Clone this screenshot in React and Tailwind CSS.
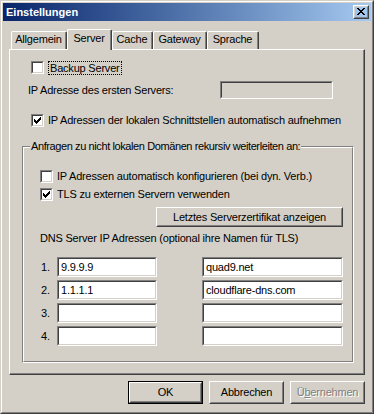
import React from "react";

const Sunken = ({ className = "", inner = "bg-white", children }) => (
  <div className={`border border-t-[#808080] border-l-[#808080] border-r-white border-b-white ${className}`}>
    <div className={`h-full w-full border border-t-[#404040] border-l-[#404040] border-r-[#D4D0C8] border-b-[#D4D0C8] ${inner} flex items-center pl-px overflow-hidden whitespace-nowrap`}>
      {children}
    </div>
  </div>
);

const Raised = ({ className = "", innerClass = "", children }) => (
  <div className={`border border-t-white border-l-white border-r-[#404040] border-b-[#404040] ${className}`}>
    <div className={`h-full w-full border border-t-[#D4D0C8] border-l-[#D4D0C8] border-r-[#808080] border-b-[#808080] flex justify-center ${innerClass}`}>
      {children}
    </div>
  </div>
);

const Check = ({ checked }) => (
  <div className="w-[13px] h-[13px] shrink-0 border border-t-[#808080] border-l-[#808080] border-r-white border-b-white">
    <div className="h-full w-full border border-t-[#404040] border-l-[#404040] border-r-[#D4D0C8] border-b-[#D4D0C8] bg-white pl-px pt-px">
      {checked && (
        <svg width="7" height="7" viewBox="0 0 7 7" shapeRendering="crispEdges" className="block">
          <path
            fill="#000"
            d="M6 0h1v1h-1z M5 1h2v1h-2z M0 2h1v1h-1z M4 2h3v1h-3z M0 3h2v1h-2z M3 3h3v1h-3z M0 4h5v1h-5z M1 5h3v1h-3z M2 6h1v1h-1z"
          />
        </svg>
      )}
    </div>
  </div>
);

const Tab = ({ className = "", children }) => (
  <div className={`h-[18px] border-t border-l border-t-white border-l-white border-r border-r-[#404040] rounded-tl-[2px] rounded-tr-[2px] ${className}`}>
    <div className="h-full border-r border-r-[#808080] flex items-center justify-center pb-[2px] whitespace-nowrap">
      {children}
    </div>
  </div>
);

const DnsRow = ({ n, ip, name }) => (
  <div className="flex items-center h-[20px] ml-[16px]">
    <span className="w-[17px] pl-px">{n}</span>
    <Sunken className="w-[100px] h-[20px]">
      <span className="pl-px">{ip}</span>
    </Sunken>
    <Sunken className="ml-[45px] w-[141px] h-[20px]">
      <span className="pl-px">{name}</span>
    </Sunken>
  </div>
);

export default function App() {
  return (
    <div className="w-[374px] h-[414px] bg-[#D4D0C8] border border-t-[#D4D0C8] border-l-[#D4D0C8] border-r-[#404040] border-b-[#404040] font-['Liberation_Sans',Arial,sans-serif] text-[11px] leading-[13px] tracking-[-0.2px] text-black select-none">
      <div className="h-full border border-t-white border-l-white border-r-[#808080] border-b-[#808080] p-px flex flex-col">
        {/* Title bar */}
        <div className="h-[18px] shrink-0 flex items-center pl-[3px] pr-[2px] bg-linear-to-r from-[#0A246A] to-[#A6CAF0]">
          <span className="text-white font-bold tracking-normal">Einstellungen</span>
          <Raised className="ml-auto w-[16px] h-[14px]" innerClass="items-start pt-px">
            <svg width="8" height="7" viewBox="0 0 8 7" shapeRendering="crispEdges" className="block">
              <path
                fill="#000"
                d="M0 0h2v1h-2z M6 0h2v1h-2z M1 1h2v1h-2z M5 1h2v1h-2z M2 2h4v1h-4z M3 3h2v1h-2z M2 4h4v1h-4z M1 5h2v1h-2z M5 5h2v1h-2z M0 6h2v1h-2z M6 6h2v1h-2z"
              />
            </svg>
          </Raised>
        </div>

        <div className="flex-1 px-[6px] pt-[8px] flex flex-col">
          {/* Tabs */}
          <div className="h-[20px] flex items-end pl-[2px]">
            <Tab className="w-[56px]">Allgemein</Tab>
            <div className="relative z-10 w-[45px] h-[21px] -mb-px bg-[#D4D0C8] border-t border-l border-t-white border-l-white border-r border-r-[#404040] rounded-tl-[2px] rounded-tr-[2px]">
              <div className="h-full border-r border-r-[#808080] flex items-center justify-center pb-[3px]">Server</div>
            </div>
            <Tab className="w-[41px]">Cache</Tab>
            <Tab className="w-[54px]">Gateway</Tab>
            <Tab className="w-[52px]">Sprache</Tab>
          </div>

          {/* Panel */}
          <div className="h-[326px] border-t border-l border-t-white border-l-white border-r border-b border-r-[#404040] border-b-[#404040]">
            <div className="h-full border-r border-b border-r-[#808080] border-b-[#808080] flex flex-col">
              <div className="mt-[11px] ml-[21px] flex items-center h-[13px]">
                <Check />
                <span className="ml-[4px] border border-dotted border-black px-px h-[14px] leading-[12px]">Backup Server</span>
              </div>

              <div className="mt-[7px] ml-[18px] flex items-center h-[18px]">
                <span className="w-[192px] whitespace-nowrap">IP Adresse des ersten Servers:</span>
                <Sunken className="w-[113px] h-[18px]" inner="bg-[#D4D0C8]" />
              </div>

              <div className="mt-[15px] ml-[21px] flex items-center h-[13px]">
                <Check checked />
                <span className="ml-[4px] whitespace-nowrap">IP Adressen der lokalen Schnittstellen automatisch aufnehmen</span>
              </div>

              {/* Group box */}
              <div className="relative mt-[19px] ml-[12px] mr-[9px] h-[217px] border border-t-[#808080] border-l-[#808080] border-r-white border-b-white">
                <div className="h-full border border-t-white border-l-white border-r-[#808080] border-b-[#808080] flex flex-col">
                  <div className="mt-[22px] ml-[16px] flex items-center h-[13px]">
                    <Check />
                    <span className="ml-[4px] whitespace-nowrap">IP Adressen automatisch konfigurieren (bei dyn. Verb.)</span>
                  </div>
                  <div className="mt-[5px] ml-[16px] flex items-center h-[13px]">
                    <Check checked />
                    <span className="ml-[4px] whitespace-nowrap">TLS zu externen Servern verwenden</span>
                  </div>
                  <Raised className="mt-[6px] self-end mr-[9px] w-[187px] h-[20px]" innerClass="items-center">
                    <span className="whitespace-nowrap">Letztes Serverzertifikat anzeigen</span>
                  </Raised>
                  <div className="mt-[5px] ml-[16px] h-[13px] whitespace-nowrap">
                    DNS Server IP Adressen (optional ihre Namen für TLS)
                  </div>
                  <div className="mt-[12px] flex flex-col gap-[3px]">
                    <DnsRow n="1." ip="9.9.9.9" name="quad9.net" />
                    <DnsRow n="2." ip="1.1.1.1" name="cloudflare-dns.com" />
                    <DnsRow n="3." ip="" name="" />
                    <DnsRow n="4." ip="" name="" />
                  </div>
                </div>
                <span className="absolute left-[7px] -top-[7px] px-px bg-[#D4D0C8] whitespace-nowrap tracking-[-0.4px]">
                  Anfragen zu nicht lokalen Domänen rekursiv weiterleiten an:
                </span>
              </div>
            </div>
          </div>

          {/* Buttons */}
          <div className="mt-[6px] flex justify-end gap-[6px]">
            <div className="w-[75px] h-[23px] border border-black">
              <Raised className="w-full h-full" innerClass="items-center">
                <span>OK</span>
              </Raised>
            </div>
            <Raised className="w-[75px] h-[23px]" innerClass="items-center">
              <span>Abbrechen</span>
            </Raised>
            <Raised className="w-[75px] h-[23px]" innerClass="items-center">
              <span className="text-[#808080] [text-shadow:1px_1px_0_#ffffff]">
                Ü<span className="underline">b</span>ernehmen
              </span>
            </Raised>
          </div>
        </div>
      </div>
    </div>
  );
}
